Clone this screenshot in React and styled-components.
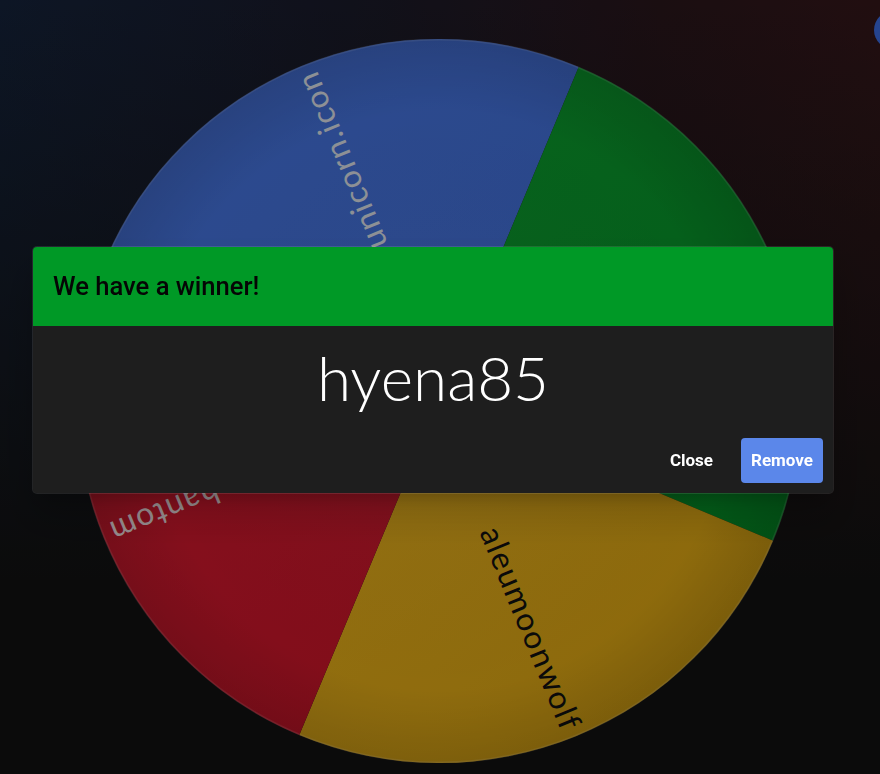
import styled, { createGlobalStyle } from "styled-components"

const GlobalStyle = createGlobalStyle`
    html, body {
        margin: 0;
        padding: 0;
        background: #121212;
        overflow: hidden;
    }

    body {
        font-family: Roboto, "Liberation Sans", sans-serif;
    }
`

const Page = styled.main`
    position: relative;
    width: 880px;
    height: 774px;
    overflow: hidden;
    background:
        linear-gradient(to bottom, rgba(18, 18, 18, 0) 0%, rgba(18, 18, 18, 0.6) 45%, #121212 75%),
        linear-gradient(to right, #15233b 0%, #1a1b2a 40%, #2a161c 75%, #35171a 100%);

    display: flex;
    justify-content: center;
    align-items: flex-start;
    padding-top: 39px;
    box-sizing: border-box;
`

const WheelBox = styled.figure`
    margin: 0 0 0 -2px;
    width: 724px;
    height: 724px;
`

const CornerButton = styled.button`
    position: absolute;
    top: 11px;
    right: -32px;
    width: 38px;
    height: 38px;
    border: none;
    border-radius: 50%;
    background: #3a6be0;
`

const Backdrop = styled.div`
    position: fixed;
    inset: 0;
    background: rgba(0, 0, 0, 0.36);

    display: flex;
    align-items: center;
    justify-content: center;
    padding: 0 14px 35px 0;
`

const Dialog = styled.section`
    width: 800px;
    border-radius: 4px;
    overflow: hidden;
    background: #1e1e1e;
    box-shadow:
        0 0 0 1px rgba(255, 255, 255, 0.1),
        0 11px 15px -7px rgba(0, 0, 0, 0.2),
        0 24px 38px 3px rgba(0, 0, 0, 0.14);
`

const Header = styled.header`
    height: 79px;
    padding: 0 20px;
    background: #009926;
    display: flex;
    align-items: center;
`

const Title = styled.h2`
    margin: 0;
    font-family: Roboto, "Liberation Sans", sans-serif;
    font-size: 25.6px;
    font-weight: 500;
    color: #050505;
`

const Body = styled.div`
    padding: 12px 24px 0;
    text-align: center;
`

const Winner = styled.p`
    margin: 0;
    font-family: Lato, "Open Sans", sans-serif;
    font-weight: 300;
    font-size: 62px;
    line-height: 78px;
    color: #fff;
`

const Actions = styled.div`
    display: flex;
    justify-content: flex-end;
    align-items: center;
    gap: 18px;
    padding: 22px 10px 10px;
`

const ActionButton = styled.button`
    height: 45px;
    padding: 0 10px;
    border: none;
    border-radius: 4px;
    font-family: Roboto, "Liberation Sans", sans-serif;
    font-size: 17px;
    font-weight: 700;
    color: #fff;
    background: ${(p) => (p.$primary ? "#5b87ea" : "transparent")};
    cursor: pointer;
`

const R = 362

const slices = [
    { name: "unicorn.icon", color: "#3d6ee0", text: "#dde2ea", from: -67.3 },
    { name: "hyena85", color: "#009925", text: "#e8e8e8", from: 22.7 },
    { name: "aleumoonwolf", color: "#eeb211", text: "#111", from: 112.7 },
    { name: "lilphantom", color: "#d50f25", text: "#eadadc", from: 202.7 },
]

function point(angle, r) {
    const rad = (angle * Math.PI) / 180
    return `${(r * Math.sin(rad)).toFixed(2)} ${(-r * Math.cos(rad)).toFixed(2)}`
}

function slicePath(a0, a1) {
    return `M0 0 L${point(a0, R)} A${R} ${R} 0 0 1 ${point(a1, R)} Z`
}

function Wheel() {
    return (
        <svg viewBox={`${-R} ${-R} ${R * 2} ${R * 2}`} width={R * 2} height={R * 2}>
            <defs>
                <radialGradient id="shade" cx="0" cy="0" r={R} gradientUnits="userSpaceOnUse">
                    <stop offset="0" stopColor="#fff" stopOpacity="0.05" />
                    <stop offset="0.8" stopColor="#000" stopOpacity="0" />
                    <stop offset="1" stopColor="#000" stopOpacity="0.12" />
                </radialGradient>
                <linearGradient id="light" x1="0" y1="0" x2="1" y2="1">
                    <stop offset="0" stopColor="#fff" stopOpacity="0.05" />
                    <stop offset="1" stopColor="#000" stopOpacity="0.1" />
                </linearGradient>
            </defs>
            {slices.map((s) => (
                <path key={s.name} d={slicePath(s.from, s.from + 90)} fill={s.color} />
            ))}
            <circle r={R} fill="url(#shade)" />
            <circle r={R} fill="url(#light)" />
            {slices.map((s) => (
                <text
                    key={s.name + "-label"}
                    transform={`rotate(${s.from + 45 - 90})`}
                    x={R - 8}
                    y="0"
                    textAnchor="end"
                    dominantBaseline="central"
                    fontFamily="Lato, 'Open Sans', sans-serif"
                    fontSize="32"
                    letterSpacing="1.4"
                    fill={s.text}
                >
                    {s.name}
                </text>
            ))}
            <circle r={R - 0.5} fill="none" stroke="#fff" strokeOpacity="0.12" strokeWidth="2" />
        </svg>
    )
}

export default function App() {
    return (
        <Page>
            <GlobalStyle />
            <WheelBox>
                <Wheel />
            </WheelBox>
            <CornerButton aria-label="menu" />
            <Backdrop>
                <Dialog role="dialog">
                    <Header>
                        <Title>We have a winner!</Title>
                    </Header>
                    <Body>
                        <Winner>hyena85</Winner>
                    </Body>
                    <Actions>
                        <ActionButton>Close</ActionButton>
                        <ActionButton $primary>Remove</ActionButton>
                    </Actions>
                </Dialog>
            </Backdrop>
        </Page>
    )
}
